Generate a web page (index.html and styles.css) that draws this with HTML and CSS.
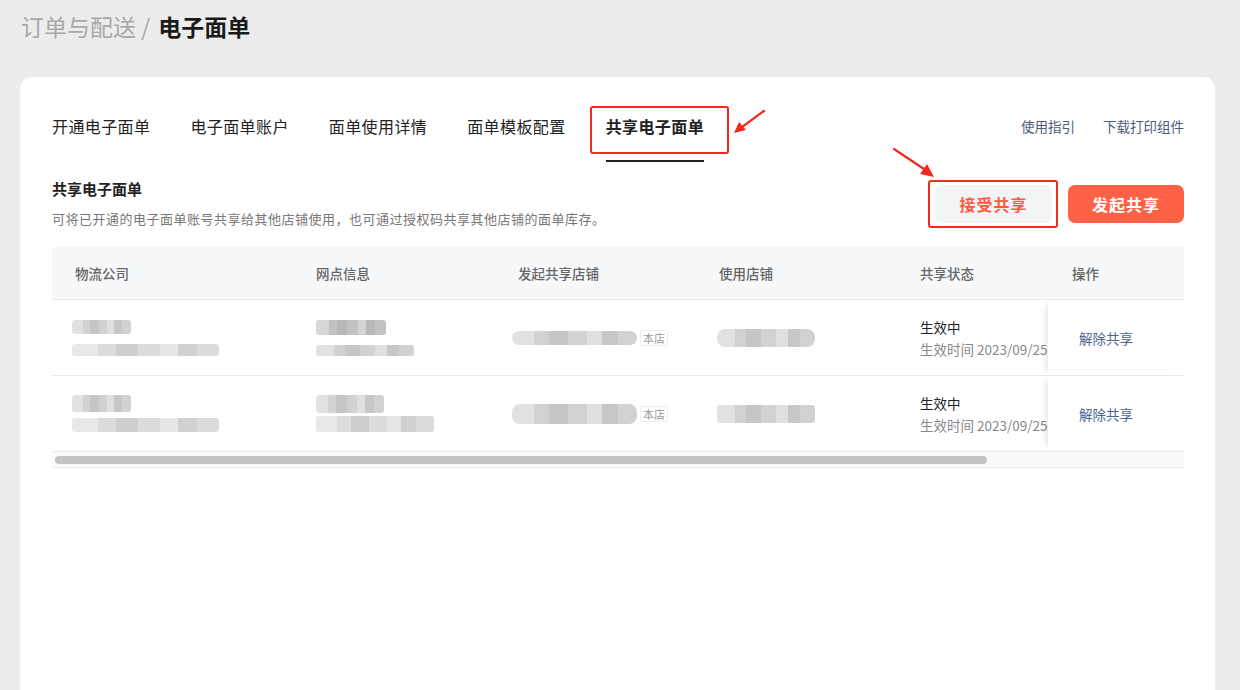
FILE: index.html
```html
<!DOCTYPE html>
<html lang="zh-CN">

<head>
    <meta charset="UTF-8">
    <meta name="viewport" content="width=device-width, initial-scale=1.0">
    <title>电子面单</title>
    <link rel="stylesheet" href="styles.css">
</head>

<body>
    <div class="crumbs"><span class="crumb-parent">订单与配送 / </span><b>电子面单</b></div>

    <div class="card">
        <div class="nav">
            <div class="tabs">
                <span class="tab">开通电子面单</span>
                <span class="tab">电子面单账户</span>
                <span class="tab">面单使用详情</span>
                <span class="tab">面单模板配置</span>
                <span class="tab active">共享电子面单
                    <i class="mark mark-tab"></i>
                    <svg class="arrow arrow-tab" width="34" height="26" viewBox="0 0 34 26">
                        <path d="M31 2 L9 18" stroke="#f22a1e" stroke-width="2.2" fill="none" stroke-linecap="round"/>
                        <path d="M1 24 L6 13 L13 21 Z" fill="#f22a1e"/>
                    </svg>
                </span>
            </div>
            <div class="links">
                <a href="#">使用指引</a>
                <a href="#">下载打印组件</a>
            </div>
        </div>

        <div class="section">
            <div>
                <h2>共享电子面单</h2>
                <p class="desc">可将已开通的电子面单账号共享给其他店铺使用，也可通过授权码共享其他店铺的面单库存。</p>
            </div>
            <div class="actions">
                <button class="btn btn-light">接受共享
                    <i class="mark mark-btn"></i>
                    <svg class="arrow arrow-btn" width="44" height="32" viewBox="0 0 44 32">
                        <path d="M2 2 L32 22" stroke="#f22a1e" stroke-width="2.2" fill="none" stroke-linecap="round"/>
                        <path d="M42 30 L28 27 L35 17 Z" fill="#f22a1e"/>
                    </svg>
                </button>
                <button class="btn btn-main">发起共享</button>
            </div>
        </div>

        <div class="table">
            <div class="row head">
                <div class="cell">物流公司</div>
                <div class="cell">网点信息</div>
                <div class="cell">发起共享店铺</div>
                <div class="cell">使用店铺</div>
                <div class="cell">共享状态</div>
                <div class="cell">操作</div>
            </div>

            <div class="row body">
                <div class="cell c1">
                    <div class="blur" style="width:59px;height:14px"></div>
                    <div class="blur light" style="width:147px;height:12px;margin-top:10px"></div>
                </div>
                <div class="cell c2">
                    <div class="blur dark" style="width:70px;height:15px"></div>
                    <div class="blur" style="width:98px;height:11px;margin-top:10px"></div>
                </div>
                <div class="cell c3">
                    <div class="blur pill" style="width:125px;height:14px"></div>
                    <span class="own">本店</span>
                </div>
                <div class="cell c4">
                    <div class="blur pill" style="width:98px;height:18px"></div>
                </div>
                <div class="cell c5">
                    <div class="state">生效中</div>
                    <div class="state-time">生效时间 2023/09/25</div>
                </div>
                <div class="cell c6"><a href="#">解除共享</a></div>
            </div>

            <div class="row body">
                <div class="cell c1">
                    <div class="blur" style="width:59px;height:17px"></div>
                    <div class="blur light" style="width:147px;height:14px;margin-top:6px"></div>
                </div>
                <div class="cell c2">
                    <div class="blur" style="width:68px;height:18px"></div>
                    <div class="blur light" style="width:118px;height:16px;margin-top:3px"></div>
                </div>
                <div class="cell c3">
                    <div class="blur pill" style="width:125px;height:20px"></div>
                    <span class="own">本店</span>
                </div>
                <div class="cell c4">
                    <div class="blur" style="width:98px;height:18px"></div>
                </div>
                <div class="cell c5">
                    <div class="state">生效中</div>
                    <div class="state-time">生效时间 2023/09/25</div>
                </div>
                <div class="cell c6"><a href="#">解除共享</a></div>
            </div>

            <div class="scroll">
                <div class="thumb"></div>
            </div>
        </div>
    </div>
</body>

</html>
```

FILE: styles.css
```css
* {
    box-sizing: border-box;
}

body {
    margin: 0;
    background: #ececec;
    font-family: "Noto Sans CJK SC", "Liberation Sans", sans-serif;
    color: #222;
    height: 690px;
    overflow: hidden;
}

.crumbs {
    height: 77px;
    padding: 11px 21px 0;
    font-size: 23px;
    line-height: 30px;
}

.crumb-parent {
    color: #a8a8a8;
}

.crumbs b {
    margin-left: 3px;
    font-weight: 600;
    color: #1a1a1a;
}

.card {
    margin: 0 25px 0 20px;
    height: 640px;
    background: #fff;
    border-radius: 12px;
    padding: 0 31px 0 32px;
}

.nav {
    display: flex;
    justify-content: space-between;
    padding-top: 35px;
}

.tabs {
    display: flex;
    gap: 40px;
}

.tab {
    position: relative;
    font-size: 16px;
    line-height: 28px;
    padding-bottom: 20px;
    color: #222;
    letter-spacing: 0.4px;
    border-bottom: 2px solid transparent;
}

.tab.active {
    font-weight: 600;
    border-bottom-color: #222;
}

.mark {
    position: absolute;
    border: 2px solid #f22a1e;
    border-radius: 3px;
}

.mark-tab {
    left: -16px;
    top: -6px;
    width: 139px;
    height: 48px;
}

.arrow {
    position: absolute;
}

.arrow-tab {
    left: 127px;
    top: -3px;
}

.links {
    display: flex;
    gap: 28px;
    padding-top: 3px;
}

.links a {
    font-size: 13.5px;
    line-height: 22px;
    color: #4d5a7c;
    text-decoration: none;
}

.section {
    display: flex;
    justify-content: space-between;
    align-items: flex-start;
}

h2 {
    margin: 16px 0 0;
    font-size: 15px;
    line-height: 22px;
    font-weight: 600;
}

.desc {
    margin: 9px 0 0;
    font-size: 13px;
    letter-spacing: 0.5px;
    line-height: 20px;
    color: #777;
}

.actions {
    display: flex;
    gap: 16px;
    margin-top: 23px;
}

.btn {
    position: relative;
    width: 117px;
    height: 38px;
    border: 0;
    border-radius: 7px;
    font-family: inherit;
    font-size: 16px;
    font-weight: 600;
    letter-spacing: 1px;
}

.btn-light {
    background: #f3f4f6;
    color: #ff5a3c;
}

.btn-main {
    width: 116px;
    background: #ff6146;
    color: #fff;
}

.mark-btn {
    left: -7px;
    top: -5px;
    width: 130px;
    height: 48px;
}

.arrow-btn {
    left: -43px;
    top: -38px;
}

.table {
    margin-top: 18px;
}

.row {
    display: grid;
    grid-template-columns: 241px 202px 201px 201px 151px 136px;
    border-bottom: 1px solid #ebebeb;
}

.head {
    height: 53px;
    background: #f7f8fa;
    font-size: 13.5px;
    color: #666;
    font-weight: 500;
}

.head .cell {
    padding-left: 23px;
    line-height: 52px;
}

.head .cell:last-child {
    padding-left: 24px;
}

.body {
    height: 76px;
}

.body .cell {
    display: flex;
    flex-direction: column;
    justify-content: center;
}

.c1 {
    padding-left: 20px;
}

.c2 {
    padding-left: 23px;
}

.body .c3 {
    padding-left: 17px;
    flex-direction: row;
    justify-content: flex-start;
    align-items: center;
    gap: 3px;
}

.c4 {
    padding-left: 21px;
}

.c5 {
    padding-left: 23px;
    overflow: hidden;
    white-space: nowrap;
    font-size: 13.5px;
    line-height: 22px;
}

.c6 {
    padding-left: 31px;
    box-shadow: -6px 0 6px -4px rgba(0, 0, 0, 0.1);
}

.c6 a {
    font-size: 13.5px;
    color: #4a6494;
    text-decoration: none;
}

.state {
    color: #222;
}

.state-time {
    color: #888;
}

.blur {
    border-radius: 3px;
    background:
        linear-gradient(90deg, rgba(255,255,255,0.35) 0 18%, transparent 18% 30%, rgba(0,0,0,0.06) 30% 45%, transparent 45% 60%, rgba(255,255,255,0.3) 60% 72%, rgba(0,0,0,0.05) 72% 85%, transparent 85%),
        #d2d2d2;
    filter: blur(0.6px);
}

.blur.dark {
    background-color: #c2c2c2;
}

.blur.light {
    background-color: #dcdcdc;
}

.blur.pill {
    border-radius: 8px;
}

.own {
    font-size: 11px;
    line-height: 14px;
    padding: 0 2px;
    color: #999;
    border: 1px solid #eee;
    border-radius: 2px;
}

.scroll {
    height: 16px;
    padding: 4px 3px;
    border-bottom: 1px solid #ebebeb;
    background: #fafafa;
}

.thumb {
    width: 932px;
    height: 8px;
    border-radius: 4px;
    background: #c4c4c4;
}
```
